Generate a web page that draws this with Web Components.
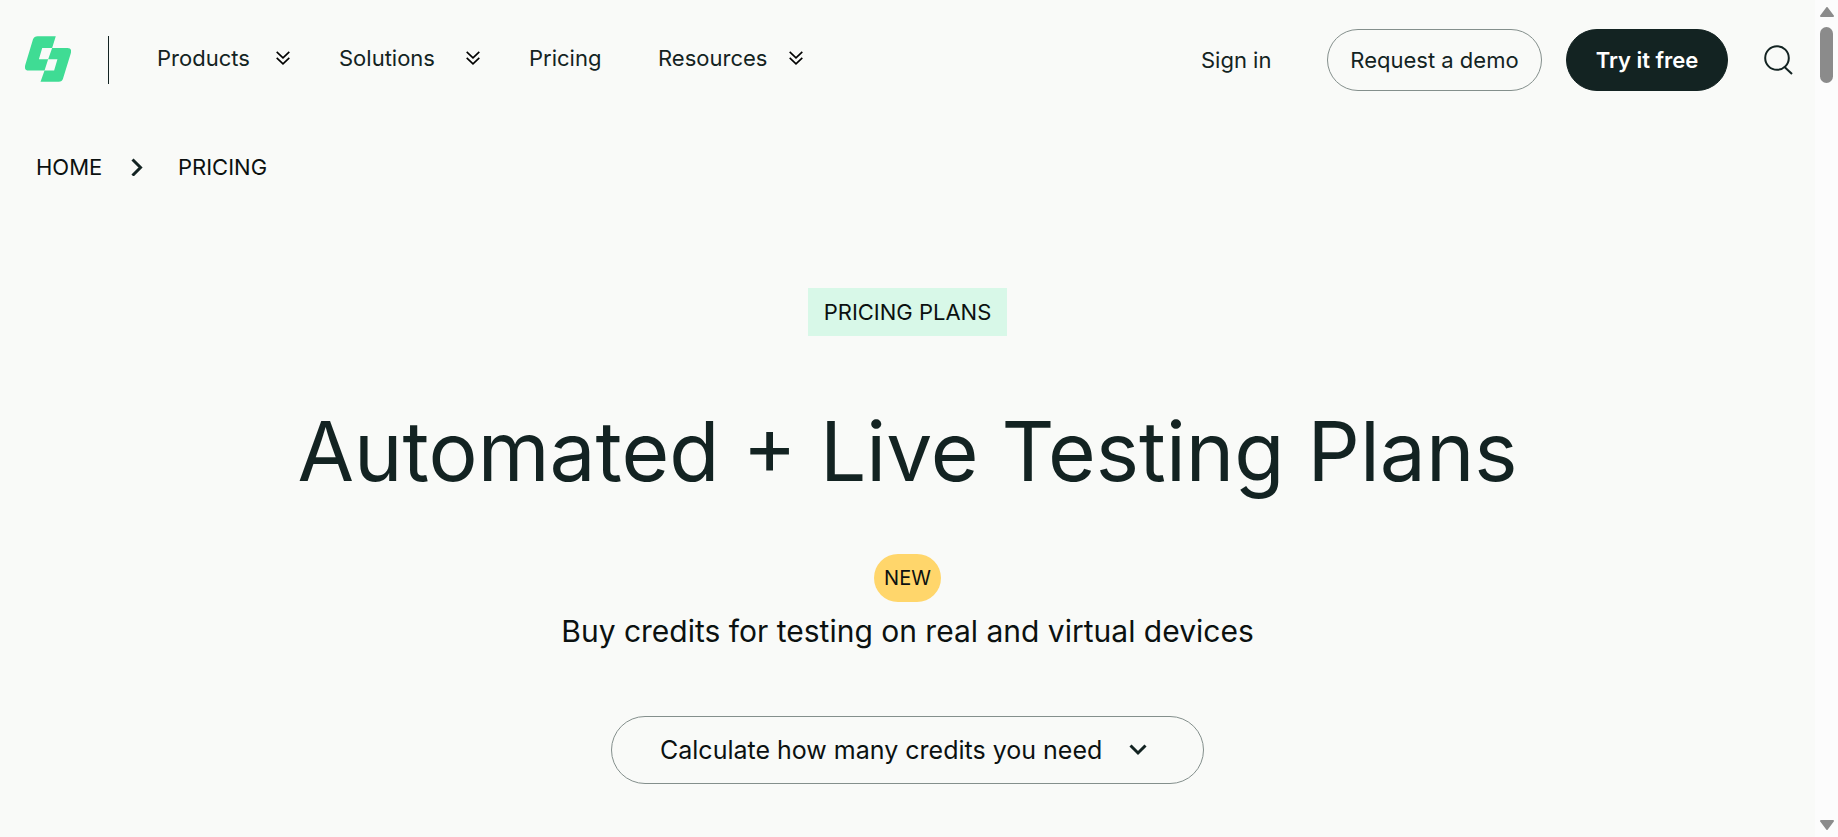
<!DOCTYPE html>
<html lang="en">
<head>
<meta charset="utf-8">
<title>Pricing</title>
<style>
  html, body { margin: 0; height: 100%; }
  body { background: #f9faf8; color: #132322; font-family: Inter, sans-serif; overflow: hidden; }
</style>
</head>
<body>
<pricing-page></pricing-page>
<script>
const define = (name, html) => {
  const template = document.createElement('template');
  template.innerHTML = html;
  customElements.define(name, class extends HTMLElement {
    constructor() {
      super();
      this.attachShadow({ mode: 'open' }).append(template.content.cloneNode(true));
    }
  });
};

define('brand-logo', `
<style>
  :host { display: block; padding-bottom: 2px; }
  a, svg { display: block; }
</style>
<a href="#" aria-label="Homepage">
  <svg width="46" height="46" viewBox="75 108 139 138" fill="#3fdc94">
    <path d="M168 108H113Q103 108 99 118L76 194Q71 212 86 212H134L145 178H117L127 144H157Z"/>
    <path d="M157 144H203Q218 144 213 161L190 236Q187 246 177 246H122L134 212H163L173 178H145Z"/>
  </svg>
</a>`);

define('nav-item', `
<style>
  :host { display: block; }
  a { display: flex; align-items: center; justify-content: space-between; padding-right: 49px;
      color: inherit; text-decoration: none; font-size: 22px; line-height: 24px; }
  :host(:not([menu])) svg { display: none; }
</style>
<a href="#"><slot></slot>
  <svg width="14" height="14" viewBox="0 0 14 14" fill="none" stroke="#000" stroke-width="1.6" aria-hidden="true">
    <path d="M.7.8 7 6.8 13.300.8M.7 6.800 7 12.800 13.300 6.800"/>
  </svg>
</a>`);

define('pill-button', `
<style>
  :host { display: block; }
  button { box-sizing: border-box; width: 100%; height: 62px; padding: 0; border: 1px solid #848f8c;
           border-radius: 31px; background: transparent; color: #132322; font: 22px/24px Inter, sans-serif;
           white-space: nowrap; cursor: pointer; }
  :host([filled]) button { background: #132322; border-color: #132322; color: #fff; font-weight: 600; }
</style>
<button type="button"><slot></slot></button>`);

define('search-button', `
<style>
  :host { display: block; }
  button { display: block; padding: 0; border: 0; background: none; cursor: pointer; }
  svg { display: block; }
</style>
<button type="button" aria-label="Search">
  <svg width="30" height="30" viewBox="0 0 30 30" fill="none" stroke="#132322" stroke-width="2">
    <circle cx="14" cy="13" r="11.800"/><path d="M21 21.500 29 29"/>
  </svg>
</button>`);

define('site-header', `
<style>
  :host { display: flex; align-items: center; height: 120px; padding: 0 22px 0 25px; }
  .rule { width: 1px; height: 48px; margin: 0 48px 0 37px; background: #132322; }
  nav { display: grid; grid-template-columns: 182px 190px 129px 194px; padding-bottom: 4px; }
  .actions { display: flex; align-items: center; margin-left: auto; }
  .signin { width: 78px; color: inherit; text-decoration: none; font-size: 22px; line-height: 24px; margin-right: 48px; white-space: nowrap; }
  .demo { width: 215px; margin-right: 24px; }
  .try { width: 162px; margin-right: 35px; }
</style>
<brand-logo></brand-logo>
<div class="rule"></div>
<nav aria-label="Main">
  <nav-item menu>Products</nav-item>
  <nav-item menu>Solutions</nav-item>
  <nav-item>Pricing</nav-item>
  <nav-item menu>Resources</nav-item>
</nav>
<div class="actions">
  <a class="signin" href="#">Sign in</a>
  <pill-button class="demo">Request a demo</pill-button>
  <pill-button class="try" filled>Try it free</pill-button>
  <search-button></search-button>
</div>`);

define('bread-crumbs', `
<style>
  :host { display: block; padding: 35px 36px 0; }
  nav { display: flex; align-items: center; gap: 35px; font-size: 22px; line-height: 24px; }
  a { color: #0b1110; text-decoration: none; }
  .home { width: 60px; }
</style>
<nav aria-label="Breadcrumb">
  <a class="home" href="#">HOME</a>
  <svg width="12" height="18" viewBox="0 0 12 18" fill="none" stroke="#132322" stroke-width="3" aria-hidden="true"><path d="M1.500 1.500 9.500 9.500 1.500 17.500"/></svg>
  <a href="#" aria-current="page">PRICING</a>
</nav>`);

define('tag-label', `
<style>
  :host { display: block; box-sizing: border-box; height: 48px; padding: 12px; font-size: 22px; line-height: 24px;
          background: #d8f8e8; color: #0b1110; text-align: center; }
  :host([round]) { background: #ffd66b; border-radius: 24px; font-size: 20px; }
</style>
<slot></slot>`);

define('credit-calculator', `
<style>
  :host { display: block; }
  button { display: flex; align-items: center; justify-content: space-between; box-sizing: border-box; width: 593px; max-width: 100%; height: 68px;
           padding: 0 56px 0 48px; border: 1px solid #848f8c; border-radius: 34px; background: transparent;
           color: #0b1110; font: 25px/32px Inter, sans-serif; cursor: pointer; }
</style>
<button type="button" aria-expanded="false">
  <span>Calculate how many credits you need</span>
  <svg width="18" height="12" viewBox="0 0 18 12" fill="none" stroke="#132322" stroke-width="3" aria-hidden="true"><path d="M1.500 1.500 9 9 16.500 1.500"/></svg>
</button>`);

define('pricing-hero', `
<style>
  :host { display: flex; flex-direction: column; align-items: center; padding-top: 109px; text-align: center; }
  .plans { width: 199px; white-space: nowrap; }
  h1 { margin: 68px 0 54px; font-size: 82px; line-height: 96px; font-weight: 400; }
  .new { width: 67px; padding: 12px 0; }
  p { margin: 9px 0 65px; font-size: 30px; line-height: 40px; color: #0b1110; }
</style>
<tag-label class="plans">PRICING PLANS</tag-label>
<h1>Automated + Live Testing Plans</h1>
<tag-label class="new" round>NEW</tag-label>
<p>Buy credits for testing on real and virtual devices</p>
<credit-calculator></credit-calculator>`);

define('scroll-rail', `
<style>
  :host { display: flex; flex-direction: column; align-items: center; box-sizing: border-box; height: 100%;
          padding: 7px 0; background: #fcfcfc; }
  .thumb { width: 13px; height: 56px; margin: 10px 0 auto; border-radius: 7px; background: #8b8b8b; }
  svg { display: block; fill: #8b8b8b; stroke: #8b8b8b; stroke-width: 2; stroke-linejoin: round; }
</style>
<svg width="14" height="10" viewBox="0 0 14 10"><path d="M7 1 13 9H1Z"/></svg>
<div class="thumb"></div>
<svg width="14" height="10" viewBox="0 0 14 10"><path d="M7 9 1 1H13Z"/></svg>`);

define('pricing-page', `
<style>
  :host { display: grid; grid-template-columns: minmax(0, 1fr) 23px; height: 100%; }
  .content { min-height: 0; overflow: hidden; }
</style>
<div class="content">
  <site-header></site-header>
  <main>
    <bread-crumbs></bread-crumbs>
    <pricing-hero></pricing-hero>
  </main>
</div>
<scroll-rail aria-hidden="true"></scroll-rail>`);
</script>
</body>
</html>
